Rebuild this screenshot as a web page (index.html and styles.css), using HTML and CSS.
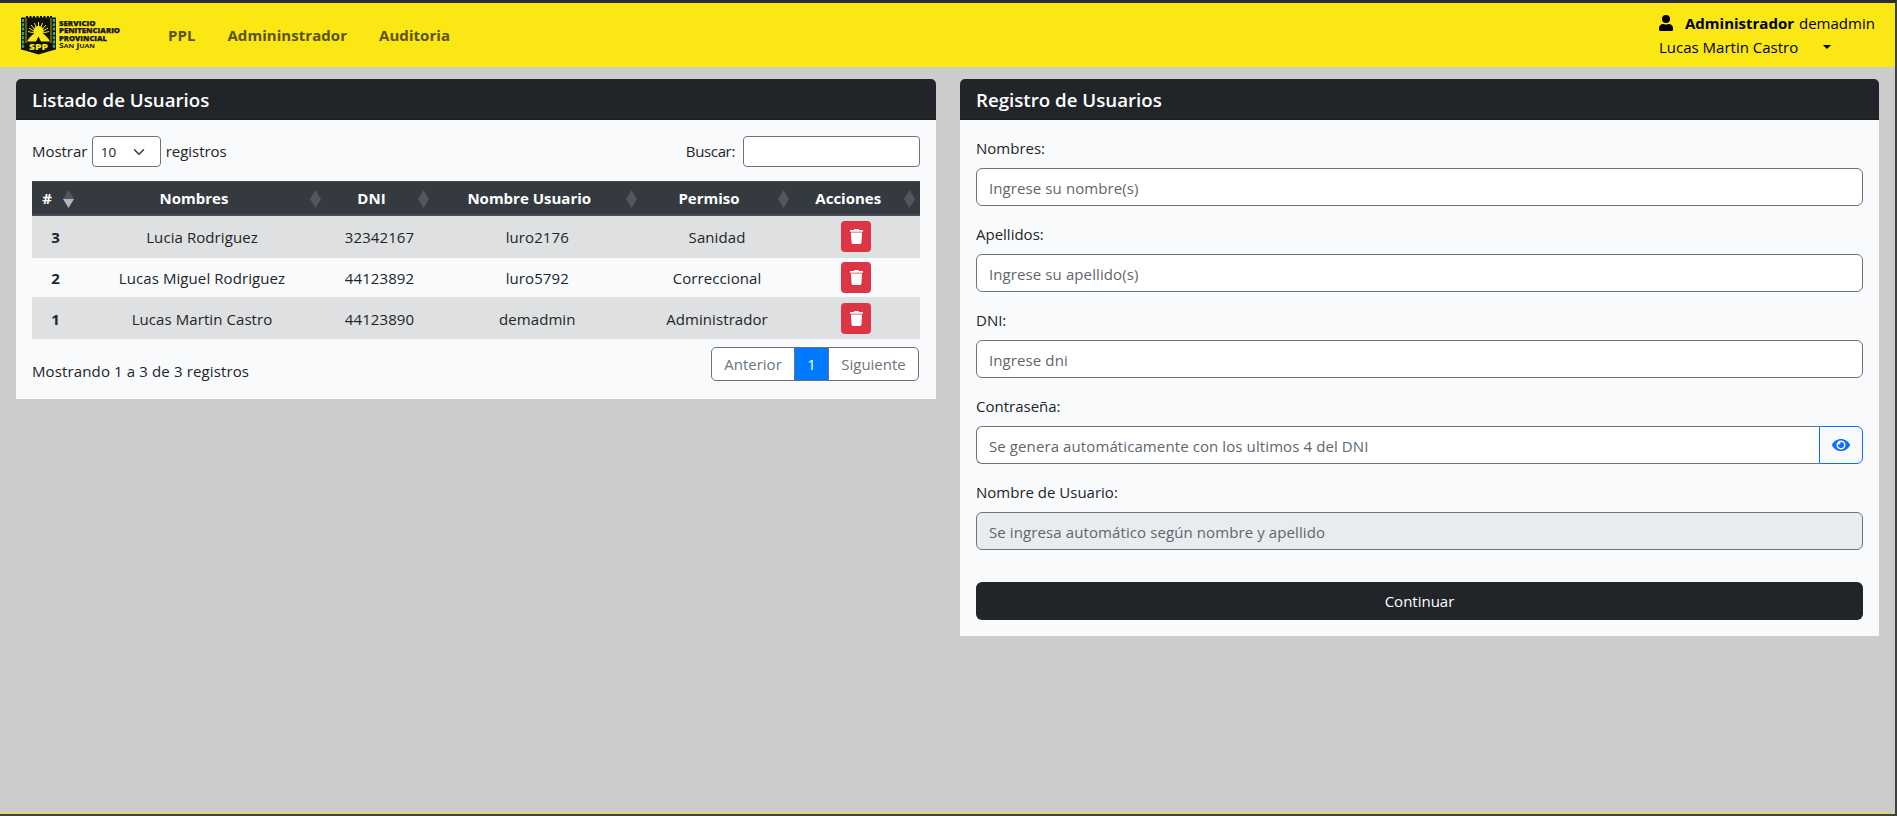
FILE: index.html
```
<!DOCTYPE html>
<html lang="es">
<head>
<meta charset="utf-8">
<title>Usuarios</title>
<link rel="stylesheet" href="styles.css">
</head>
<body>
<svg class="defs" width="0" height="0" aria-hidden="true">
  <symbol id="trash" viewBox="0 0 448 512"><path d="M432 32H312l-9.400-18.700A24 24 0 0 0 281.100 0H166.800a23.700 23.700 0 0 0-21.400 13.300L136 32H16A16 16 0 0 0 0 48v32a16 16 0 0 0 16 16h416a16 16 0 0 0 16-16V48a16 16 0 0 0-16-16z"/><path d="M32 116h384l-21 351a48 48 0 0 1-48 45H101a48 48 0 0 1-48-45z"/></symbol>
  <symbol id="sort" viewBox="0 0 11 18"><path d="M5.500 0 11 9H0z"/><path d="M0 9h11L5.500 18z"/></symbol>
</svg>
<nav class="navbar">
  <svg class="logo" width="102" height="40" viewBox="0 0 102 40">
    <path d="M1 2.500h35v32l-4 1-13.500 4-13.500-4-4-1z" fill="#11120c"/>
    <path d="M7 3V1M10.500 3V1M14 3V1M17.500 3V1M21 3V1M24.500 3V1M28 3V1M31 3V1" stroke="#11120c" stroke-width="2"/>
    <path d="M3 4v30M34 4v30" stroke="#35a77d" stroke-width="2.400" stroke-dasharray="3 1.300"/>
    <path d="M6 3v25M31 3v25" stroke="#d7c91a" stroke-width=".8"/>
    <path d="M18.500 19V7M18.500 19 14.500 8M18.500 19 22.500 8M18.500 19l-7.500-9M18.500 19l7.500-9M18.500 19 9 13M18.500 19 28 13M18.500 19 8 16.500M18.500 19 29 16.500" stroke="#f6e21a" stroke-width="1"/>
    <circle cx="18.500" cy="16" r="5" fill="#fbe714"/>
    <path d="M7 26.500c2-4 5-7 8-8l3.500 1.500 3.500-1.500c3 1 6 4 8 8h-9l-2.500-5-2.500 5z" fill="#fbe714"/>
    <text class="spp" x="9" y="35" textLength="19" lengthAdjust="spacingAndGlyphs">SPP</text>
    <text class="brand" x="39" y="10.500" textLength="36.500" lengthAdjust="spacingAndGlyphs">SERVICIO</text>
    <text class="brand" x="39" y="18" textLength="61" lengthAdjust="spacingAndGlyphs">PENITENCIARIO</text>
    <text class="brand" x="39" y="25.500" textLength="48" lengthAdjust="spacingAndGlyphs">PROVINCIAL</text>
    <text class="city" x="39" y="33.300" textLength="36" lengthAdjust="spacingAndGlyphs">S<tspan class="sc">AN</tspan> J<tspan class="sc">UAN</tspan></text>
  </svg>
  <div class="links"><a>PPL</a><a>Admininstrador</a><a>Auditoria</a></div>
  <div class="user">
    <div class="line"><svg width="14" height="16" viewBox="0 0 448 512"><path d="M224 256a128 128 0 1 0 0-256 128 128 0 0 0 0 256zm90 32h-17a174 174 0 0 1-146 0h-17A134 134 0 0 0 0 422v42a48 48 0 0 0 48 48h352a48 48 0 0 0 48-48v-42a134 134 0 0 0-134-134z"/></svg><b>Administrador</b><span>demadmin</span></div>
    <div class="line"><span>Lucas Martin Castro</span><i class="caret"></i></div>
  </div>
</nav>
<main class="page">
  <section class="card">
    <h1>Listado de Usuarios</h1>
    <div class="body">
      <div class="tools">
        <div class="length"><span>Mostrar</span><span class="select">10<svg width="12" height="12" viewBox="0 0 16 16"><path d="m2 5 6 6 6-6" fill="none" stroke="#343a40" stroke-width="2" stroke-linecap="round" stroke-linejoin="round"/></svg></span><span>registros</span></div>
        <div class="search"><span>Buscar:</span><input type="text"></div>
      </div>
      <div class="table">
        <div class="row head">
          <div>#<svg viewBox="0 0 11 18"><path d="M5.500 0 11 9H0z"/><path class="active" d="M0 9h11L5.500 18z"/></svg></div><div>Nombres<svg><use href="#sort"/></svg></div><div>DNI<svg><use href="#sort"/></svg></div><div>Nombre Usuario<svg><use href="#sort"/></svg></div><div>Permiso<svg><use href="#sort"/></svg></div><div>Acciones<svg><use href="#sort"/></svg></div>
        </div>
        <div class="row odd r1"><b>3</b><span>Lucia Rodriguez</span><span>32342167</span><span>luro2176</span><span>Sanidad</span><button class="del"><svg><use href="#trash"/></svg></button></div>
        <div class="row r2"><b>2</b><span>Lucas Miguel Rodriguez</span><span>44123892</span><span>luro5792</span><span>Correccional</span><button class="del"><svg><use href="#trash"/></svg></button></div>
        <div class="row odd r3"><b>1</b><span>Lucas Martin Castro</span><span>44123890</span><span>demadmin</span><span>Administrador</span><button class="del"><svg><use href="#trash"/></svg></button></div>
      </div>
      <div class="foot">
        <span class="info">Mostrando 1 a 3 de 3 registros</span>
        <div class="pager"><span class="prev">Anterior</span><span class="cur">1</span><span class="next">Siguiente</span></div>
      </div>
    </div>
  </section>
  <section class="card">
    <h1>Registro de Usuarios</h1>
    <form class="body form">
      <label>Nombres:</label><input class="field" placeholder="Ingrese su nombre(s)">
      <label>Apellidos:</label><input class="field" placeholder="Ingrese su apellido(s)">
      <label>DNI:</label><input class="field" placeholder="Ingrese dni">
      <label>Contraseña:</label>
      <div class="group"><input class="field" placeholder="Se genera automáticamente con los ultimos 4 del DNI"><button type="button" class="eye"><svg width="18" height="16" viewBox="0 0 576 512"><path fill-rule="evenodd" d="M572.500 241.400C518.300 135.600 410.900 64 288 64S57.700 135.600 3.500 241.400a32.400 32.400 0 0 0 0 29.200C57.700 376.400 165.100 448 288 448s230.300-71.600 284.500-177.400a32.400 32.400 0 0 0 0-29.200zM288 400a144 144 0 1 1 144-144 143.900 143.900 0 0 1-144 144zm0-240a95.300 95.300 0 0 0-25.300 3.800 47.900 47.900 0 0 1-66.900 66.900A95.800 95.800 0 1 0 288 160z"/></svg></button></div>
      <label>Nombre de Usuario:</label><input class="field" disabled placeholder="Se ingresa automático según nombre y apellido">
      <button type="button" class="submit">Continuar</button>
    </form>
  </section>
</main>
</body>
</html>
```
FILE: styles.css
```
* { box-sizing: border-box; }
body {
  margin: 0; height: 816px; overflow: hidden; display: flex; flex-direction: column;
  background: #ccc; color: #212529;
  border-top: 3px solid #2d2b30; border-right: 2px solid #404143; border-bottom: 2px solid #404143;
  font: 15px/24px "Open Sans", "Noto Sans", sans-serif;
  box-shadow: inset 0 -1px #f7df22;
}
.defs { position: absolute; }
input, button { font: inherit; letter-spacing: inherit; }
.navbar { height: 64px; flex: none; background: #fae714; display: flex; padding-left: 20px; }
.logo { margin-top: 12px; flex: none; }
.spp { font: 800 9.500px "Open Sans", sans-serif; fill: #fbe714; }
.brand { font: 800 6.900px "Open Sans", sans-serif; fill: #15150b; stroke: #15150b; stroke-width: .25px; }
.city { font: 700 6.500px "Open Sans", sans-serif; fill: #15150b; }
.sc { font-size: 5.200px; }
.links { display: flex; gap: 32px; margin: 20px 0 0 46px; font-weight: 700; color: #5a5308; letter-spacing: .05px; }
.user { margin: 8px 0 0 auto; width: 236px; color: #000; }
.line { display: flex; align-items: center; height: 24px; }
.line svg { margin-right: 12px; }
.line b { margin-right: 5px; }
.caret { margin-left: 25px; border: 4.500px solid transparent; border-top-color: #000; border-bottom: 0; }
.page { display: flex; align-items: flex-start; gap: 24px; padding: 12px 16px; }
.card { flex: 1 1 0; background: #f9fafc; border-radius: 5px 5px 0 0; }
.card h1 {
  margin: 0; height: 41px; padding-left: 16px; background: #212529; color: #fff;
  border-bottom: 1px solid #1a1d22; border-radius: 5px 5px 0 0;
  font-size: 18.700px; line-height: 42px; font-weight: 600;
}
.body { padding: 16px; }
.tools { display: flex; justify-content: space-between; height: 31px; line-height: 30px; }
.length, .search { display: flex; }
.length { letter-spacing: -.05px; }
.search { letter-spacing: -.35px; }
.select {
  width: 69px; height: 31px; margin: 0 5px 0 4.500px; padding: 0 15px 0 8px; border: 1px solid #6c757d; border-radius: 4px;
  background: #fff; font-size: 13.500px; display: flex; align-items: center; justify-content: space-between;
}
.search input { width: 177px; height: 31px; margin-left: 8px; border: 1px solid #6c757d; border-radius: 4px; background: #fff; }
.table { margin-top: 14px; letter-spacing: .08px; }
.row { display: grid; grid-template-columns: 47px 247px 108px 207.500px 152px 126.500px; text-align: center; line-height: 33px; }
.row > span { padding-right: 1px; }
.head { height: 35px; background: #343a40; color: #fff; border-top: 1px solid #454d55; border-bottom: 2px solid #454d55; font-weight: 700; letter-spacing: 0; }
.head div { position: relative; padding-right: 17px; }
.head svg { position: absolute; right: 5px; top: 8px; width: 11px; height: 18px; fill: #53575c; }
.head .active { fill: #b5b7ba; }
.r1, .r3 { height: 42px; padding-top: 5px; }
.r2 { height: 39px; padding-top: 4px; }
.r3 { padding-top: 6px; }
.odd { background: #dfe0e2; }
.del { justify-self: center; width: 30px; height: 31px; margin-right: 1px; padding: 0; border: 0; border-radius: 4px; background: #dc3545; display: grid; place-items: center; }
.del svg { width: 13px; height: 15px; fill: #fff; }
.foot { display: flex; justify-content: space-between; height: 44px; }
.info { padding-top: 20px; letter-spacing: .13px; }
.pager { display: flex; width: 208px; height: 34px; margin: 8px 1px 0 0; border: 1px solid #6c757d; border-radius: 5px; background: #fff; color: #6c757d; text-align: center; line-height: 33px; overflow: hidden; }
.prev { width: 82px; }
.cur { width: 35px; background: #007bff; color: #fff; border: 1px solid #6c757d; border-width: 0 1px; }
.next { flex: 1; }
.form { display: flex; flex-direction: column; }
.form label { margin-bottom: 8px; }
.field { width: 100%; height: 38px; margin: 0 0 16px; padding: 2px 12px 0; border: 1px solid #6c757d; border-radius: 6px; background: #fff; letter-spacing: .1px; }
.field::placeholder { color: #5f666d; opacity: 1; }
.field:disabled { background: #e9ecef; }
.group { display: flex; }
.group .field { flex: 1; border-right: 0; border-radius: 6px 0 0 6px; }
.eye { width: 44px; height: 38px; padding: 0; border: 1px solid #0d6efd; border-radius: 0 6px 6px 0; background: none; fill: #0d6efd; display: grid; place-items: center; }
.submit { height: 38px; margin-top: 16px; border: 0; border-radius: 6px; background: #212529; color: #fff; }
```
